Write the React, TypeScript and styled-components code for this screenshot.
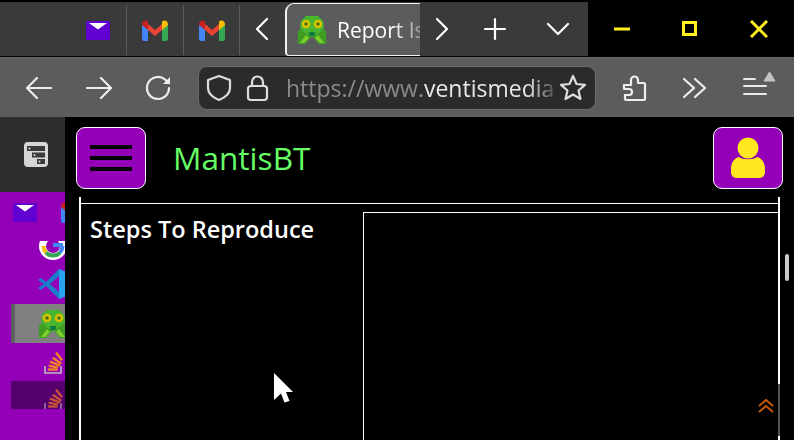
import * as React from "react";
import styled, { createGlobalStyle } from "styled-components";

const Global = createGlobalStyle`
    html, body {
        margin: 0;
        background: #000;
        font-family: "Open Sans", "Noto Sans", sans-serif;
    }
`;

const Window = styled.div`
    position: relative;
    width: 794px;
    height: 440px;
    overflow: hidden;
    display: flex;
    flex-direction: column;
    background: #000;
`;

const TitleBar = styled.header`
    flex: 0 0 auto;
    height: 54px;
    margin-top: 2px;
    margin-bottom: 1px;
    display: flex;
    align-items: stretch;
    color: #fff;
`;

const TabStrip = styled.div`
    width: 588px;
    flex: 0 0 auto;
    padding-left: 70px;
    box-sizing: border-box;
    display: flex;
    background: #3a3a3a;
`;

const PinnedTab = styled.div`
    width: ${props => props.$width}px;
    flex: 0 0 auto;
    box-sizing: border-box;
    border-right: 1px solid #5c5c5c;
    margin: 3px 0 1px;
    display: flex;
    align-items: center;
    justify-content: center;
`;

const StripButton = styled.div`
    width: ${props => props.$width}px;
    flex: 0 0 auto;
    display: flex;
    align-items: center;
    justify-content: center;
`;

const ActiveTab = styled.div`
    width: 135px;
    height: 53px;
    flex: 0 0 auto;
    margin-top: 1px;
    box-sizing: border-box;
    padding-left: 11px;
    border: 1px solid #f2f2f2;
    border-left-width: 2px;
    border-right: 0;
    border-radius: 9px 0 0 4px;
    background: #5b5c5e;
    display: flex;
    align-items: center;
    gap: 11px;
    overflow: hidden;
`;

const TabTitle = styled.span`
    font-size: 21px;
    color: #fff;
    white-space: nowrap;
    -webkit-mask-image: linear-gradient(90deg, #000 62%, rgba(0, 0, 0, .25) 100%);
    mask-image: linear-gradient(90deg, #000 62%, rgba(0, 0, 0, .25) 100%);
`;

const WindowControls = styled.div`
    flex: 1;
    display: flex;
    align-items: center;
`;

const WindowControl = styled.div`
    width: ${props => props.$width}px;
    display: flex;
    justify-content: center;
`;

const NavBar = styled.nav`
    flex: 0 0 auto;
    height: 60px;
    padding-left: 9px;
    box-sizing: border-box;
    display: flex;
    align-items: center;
    background: #5b5c5e;
    border-top: 1px solid #6a6a6c;
`;

const NavButton = styled.div`
    width: 60px;
    display: flex;
    justify-content: center;
    color: #eee;
`;

const UrlBar = styled.div`
    width: 398px;
    height: 44px;
    margin: 0 9px;
    box-sizing: border-box;
    border: 1px solid #6c6c6e;
    border-radius: 9px;
    background: #2b2b2b;
    display: flex;
    align-items: center;
    color: #ddd;
`;

const UrlIcon = styled.span`
    width: ${props => props.$width}px;
    flex: 0 0 auto;
    display: flex;
    justify-content: flex-end;
`;

const UrlText = styled.span`
    width: 268px;
    margin-left: 14px;
    font-size: 23px;
    color: #8b8b8b;
    white-space: nowrap;
    -webkit-mask-image: linear-gradient(90deg, #000 90%, rgba(0, 0, 0, .2) 100%);
    mask-image: linear-gradient(90deg, #000 90%, rgba(0, 0, 0, .2) 100%);

    b {
        font-weight: 400;
        color: #e8e8e8;
    }
`;

const Body = styled.div`
    flex: 1;
    min-height: 0;
    display: flex;
`;

const Sidebar = styled.aside`
    width: 65px;
    flex: 0 0 auto;
    overflow: hidden;
    display: flex;
    flex-direction: column;
    background: #9400b8;
`;

const SidebarHead = styled.div`
    height: 75px;
    flex: 0 0 auto;
    padding-left: 24px;
    display: flex;
    align-items: center;
    background: #2e2e2e;
`;

const SidebarRow = styled.div`
    height: ${props => props.$height}px;
    margin-top: ${props => props.$top || 0}px;
    margin-left: 11px;
    padding-left: ${props => props.$pad}px;
    padding-top: ${props => props.$padTop || 0}px;
    box-sizing: border-box;
    flex: 0 0 auto;
    display: flex;
    align-items: ${props => props.$align || "center"};
    gap: ${props => props.$gap || 0}px;
    overflow: hidden;
    background: ${props => props.$bg || "transparent"};
    border-left: ${props => props.$strip ? `4px solid ${props.$strip}` : "0"};

    svg {
        flex: 0 0 auto;
    }
`;

const Main = styled.main`
    position: relative;
    flex: 1;
    min-width: 0;
    overflow: hidden;
`;

const TopBar = styled.div`
    height: 62px;
    padding: 10px 11px 8px;
    display: flex;
    align-items: stretch;
    justify-content: space-between;
`;

const SquareButton = styled.button`
    width: 70px;
    padding: 0;
    box-sizing: border-box;
    background: #9400b8;
    border: 1px solid #fff;
    border-radius: 9px;
    display: flex;
    align-items: center;
    justify-content: center;
`;

const Burger = styled.span`
    width: 42px;
    display: flex;
    flex-direction: column;
    gap: 7px;

    i {
        display: block;
        height: 4px;
        background: #000;
    }
`;

const Brand = styled.div`
    flex: 1;
    padding-left: 27px;
    padding-bottom: 2px;
    display: flex;
    align-items: center;
    font-size: 31.6px;
    color: #66ff66;
`;

const Panel = styled.section`
    margin-left: 14px;
    width: 701px;
    height: 260px;
    box-sizing: border-box;
    padding-top: 6px;
    border-left: 2px solid #fff;
    border-right: 2px solid #fff;
`;

const Row = styled.div`
    height: 100%;
    display: grid;
    grid-template-columns: 282px 1fr;
    border-top: 1px solid #fff;
`;

const Label = styled.div`
    padding: 8px 9px;
    font-size: 23.500px;
    line-height: 34px;
    font-weight: 600;
    color: #fff;
    white-space: nowrap;
`;

const Value = styled.div`
    margin-top: 8px;
    border-top: 1px solid #fff;
    border-left: 1px solid #fff;
`;

const ScrollThumb = styled.div`
    position: absolute;
    left: 720px;
    top: 137px;
    width: 4px;
    height: 27px;
    border-radius: 2px;
    background: #c8c8c8;
`;

const ToTop = styled.div`
    position: absolute;
    left: 677px;
    top: 267px;
    width: 38px;
    height: 52px;
    border-right: 2px solid #555;
    background: #000;
    display: flex;
    align-items: center;
    justify-content: center;
    padding-left: 12px;
    padding-bottom: 8px;
    box-sizing: border-box;
`;

const Pointer = styled.svg`
    position: absolute;
    left: 273px;
    top: 372px;
`;

const Stroke = ({ size = 28, width = 2.2, children }: { size?: number; width?: number; children: React.ReactNode }) => (
    <svg width={size} height={size} viewBox="0 0 28 28" fill="none" stroke="currentColor" strokeWidth={width} strokeLinecap="round" strokeLinejoin="round">
        {children}
    </svg>
);

const YahooMail = () => (
    <svg width="24" height="19" viewBox="0 0 24 19">
        <rect width="24" height="19" rx="1" fill="#6001d2" />
        <path d="M3 2h18l-9 6.500z" fill="#fff" />
    </svg>
);

const Gmail = () => (
    <svg width="26" height="21" viewBox="0 0 26 21" fill="none">
        <path d="M0 4v15a2 2 0 0 0 2 2h4V8z" fill="#4285f4" />
        <path d="M26 4v15a2 2 0 0 1-2 2h-4V8z" fill="#34a853" />
        <path d="M6 4l7 6 7-6v6l-7 6-7-6z" fill="#ea4335" />
        <path d="M0 4.500C0 1 3.500-.5 6 1.500V10L0 5z" fill="#c5221f" />
        <path d="M26 4.500C26 1 22.500-.5 20 1.500V10l6-5z" fill="#fbbc04" />
    </svg>
);

const Mantis = ({ size = 28 }: { size?: number }) => (
    <svg width={size} height={size} viewBox="0 0 28 28" style={{ flex: "0 0 auto" }}>
        <path d="M0 28V15l6-3 8 8 8-8 6 3v13h-7l-7-8-7 8z" fill="#3f9e22" />
        <path d="M2 27l6-8 3 3-5 5zM26 27l-6-8-3 3 5 5z" fill="#7fd02c" />
        <path d="M8 0h12l5 5 1 7-5 5-7 4-7-4-5-5 1-7z" fill="#49b52e" />
        <path d="M11 16h6l-.500 4h-5z" fill="#0f7a3c" />
        <circle cx="8" cy="8" r="4.300" fill="#d8c400" />
        <circle cx="20" cy="8" r="4.300" fill="#d8c400" />
        <circle cx="8" cy="8" r="1.800" fill="#4f6a10" />
        <circle cx="20" cy="8" r="1.800" fill="#4f6a10" />
    </svg>
);

const StackOverflow = ({ bars, tray }: { bars: string; tray: string }) => (
    <svg width="20" height="24" viewBox="0 0 20 24" fill="none">
        <path d="M1 14v7h16v-7" stroke={tray} strokeWidth="1.600" />
        <g stroke={bars} strokeWidth="2.400">
            <path d="M4 17.500h9.500" />
            <path d="M4.700 13.700l9.300 2" />
            <path d="M6 9.700l10 4" />
            <path d="M8.700 5.700l8.600 6" />
            <path d="M12 .500l6 7.800" />
        </g>
    </svg>
);

const VsCode = () => (
    <svg width="28" height="30" viewBox="0 0 28 30">
        <path d="M21 0l7 3v24l-7 3L8 17l-5 4-3-2 6-4-6-4 3-2 5 4z" fill="#1a7fc9" />
        <path d="M21 7v16l-9-8z" fill="#9400b8" />
        <path d="M21 0l7 3v24l-7 3z" fill="#2aa3ef" />
    </svg>
);

const GoogleG = () => (
    <svg width="28" height="20" viewBox="0 0 28 20" fill="none">
        <circle cx="14" cy="6" r="14" fill="#fff" />
        <circle cx="14" cy="6" r="7" fill="#9400b8" />
        <path d="M4.500 6a9.500 9.500 0 0 0 2.500 6.500" stroke="#fbbc05" strokeWidth="4" />
        <path d="M7 12.500a9.500 9.500 0 0 0 14 0" stroke="#34a853" strokeWidth="4" />
        <path d="M21 12.500a9.500 9.500 0 0 0 2.500-6.500" stroke="#4285f4" strokeWidth="4" />
        <path d="M14 5h10" stroke="#4285f4" strokeWidth="4" />
    </svg>
);

const TreeIcon = () => (
    <svg width="24" height="25" viewBox="0 0 24 25">
        <rect width="24" height="25" rx="4" fill="#d4d6d8" />
        <rect x="3" y="4" width="18" height="5" fill="#3a3a3a" />
        <rect x="8" y="10.500" width="13" height="5" fill="#3a3a3a" />
        <rect x="13" y="17" width="8" height="5" fill="#3a3a3a" />
        <circle cx="5.500" cy="6.500" r="1" fill="#ddd" />
        <circle cx="10.500" cy="13" r="1" fill="#ddd" />
        <circle cx="15.500" cy="19.500" r="1" fill="#ddd" />
    </svg>
);

const UserIcon = () => (
    <svg width="36" height="42" viewBox="0 0 36 42">
        <circle cx="18" cy="11" r="10.500" fill="#ffe81f" />
        <path d="M9 20c3 3 15 3 18 0 5 1 8 6 8 12v4a6 6 0 0 1-5 5H6a6 6 0 0 1-5-5v-4c0-6 3-11 8-12z" fill="#ffe81f" />
    </svg>
);

const App = () => (
    <Window>
        <Global />
        <TitleBar>
            <TabStrip>
                <PinnedTab $width={57}><YahooMail /></PinnedTab>
                <PinnedTab $width={57}><Gmail /></PinnedTab>
                <PinnedTab $width={56}><Gmail /></PinnedTab>
                <StripButton $width={45}>
                    <Stroke><path d="M18 4L8 14l10 10" /></Stroke>
                </StripButton>
                <ActiveTab>
                    <Mantis />
                    <TabTitle>Report Is</TabTitle>
                </ActiveTab>
                <StripButton $width={42}>
                    <Stroke><path d="M10 4l10 10-10 10" /></Stroke>
                </StripButton>
                <StripButton $width={65}>
                    <Stroke><path d="M14 4v20M4 14h20" /></Stroke>
                </StripButton>
                <StripButton $width={61}>
                    <Stroke><path d="M4 9l10 10L24 9" /></Stroke>
                </StripButton>
            </TabStrip>
            <WindowControls>
                <WindowControl $width={68}>
                    <svg width="16" height="16" viewBox="0 0 16 16"><path d="M0 8h16" stroke="#ffee22" strokeWidth="3" /></svg>
                </WindowControl>
                <WindowControl $width={68}>
                    <svg width="16" height="16" viewBox="0 0 16 16" fill="none"><rect x="1.500" y="1.500" width="12" height="12" stroke="#ffee22" strokeWidth="3" /></svg>
                </WindowControl>
                <WindowControl $width={70}>
                    <svg width="18" height="18" viewBox="0 0 18 18"><path d="M1 1l16 16M17 1L1 17" stroke="#ffee22" strokeWidth="3" /></svg>
                </WindowControl>
            </WindowControls>
        </TitleBar>
        <NavBar>
            <NavButton>
                <Stroke><path d="M26 14H3M12 4L2 14l10 10" /></Stroke>
            </NavButton>
            <NavButton>
                <Stroke><path d="M2 14h23M16 4l10 10-10 10" /></Stroke>
            </NavButton>
            <NavButton>
                <Stroke><path d="M24 14a11 11 0 1 1-4-8.500l4 3.500" /><path d="M25 3v7h-7z" fill="currentColor" stroke="none" /></Stroke>
            </NavButton>
            <UrlBar>
                <UrlIcon $width={34}>
                    <Stroke><path d="M14 2l11 4v8c0 6-6 10-11 12C9 24 3 20 3 14V6z" /></Stroke>
                </UrlIcon>
                <UrlIcon $width={39}>
                    <Stroke><rect x="4" y="12" width="19" height="14" rx="3" /><path d="M8 12V8a5.500 5.500 0 0 1 11 0v4" /></Stroke>
                </UrlIcon>
                <UrlText>https://www.<b>ventismedia</b>.</UrlText>
                <UrlIcon $width={33}>
                    <Stroke><path d="M14 2l3.500 8 8.500 .800-6.500 5.700 2 8.500-7.500-4.500-7.500 4.500 2-8.500L2 10.800l8.500-.800z" /></Stroke>
                </UrlIcon>
            </UrlBar>
            <NavButton>
                <Stroke><path d="M3 11h7V6a3.500 3.500 0 0 1 7 0v3h6a1 1 0 0 1 1 1v15a1 1 0 0 1-1 1H5a1 1 0 0 1-1-1v-4h4a3 3 0 0 0 0-6H3z" /></Stroke>
            </NavButton>
            <NavButton>
                <Stroke><path d="M3 5l10 9-10 9M14 5l10 9-10 9" /></Stroke>
            </NavButton>
            <NavButton>
                <svg width="42" height="36" viewBox="0 0 42 36" fill="none">
                    <path d="M10 9h11M10 16h22M10 24h22" stroke="#e8e8e8" strokeWidth="2" strokeLinecap="round" />
                    <path d="M30 11l5.500-9 5.500 9z" fill="#c4c4c6" stroke="#c4c4c6" strokeLinejoin="round" />
                </svg>
            </NavButton>
        </NavBar>
        <Body>
            <Sidebar>
                <SidebarHead><TreeIcon /></SidebarHead>
                <SidebarRow $height={24} $top={8} $pad={2} $gap={24}><YahooMail /><Gmail /></SidebarRow>
                <SidebarRow $height={19} $top={17} $pad={28} $align="flex-end"><GoogleG /></SidebarRow>
                <SidebarRow $height={30} $top={9} $pad={27}><VsCode /></SidebarRow>
                <SidebarRow $height={39} $top={5} $pad={24} $bg="#808080" $strip="#5e5e5e"><Mantis size={28} /></SidebarRow>
                <SidebarRow $height={24} $top={9} $pad={33}><StackOverflow bars="#f48024" tray="#bcbbbb" /></SidebarRow>
                <SidebarRow $height={28} $top={5} $pad={33} $padTop={8} $bg="#560070" $align="flex-start"><StackOverflow bars="#c9503a" tray="#9a7aa8" /></SidebarRow>
            </Sidebar>
            <Main>
                <TopBar>
                    <SquareButton><Burger><i /><i /><i /></Burger></SquareButton>
                    <Brand>MantisBT</Brand>
                    <SquareButton><UserIcon /></SquareButton>
                </TopBar>
                <Panel>
                    <Row>
                        <Label>Steps To Reproduce</Label>
                        <Value />
                    </Row>
                </Panel>
                <ScrollThumb />
                <ToTop>
                    <svg width="16" height="14" viewBox="0 0 16 14" fill="none" stroke="#c85a08" strokeWidth="2">
                        <path d="M1 7l7-6 7 6M1 13l7-6 7 6" />
                    </svg>
                </ToTop>
            </Main>
        </Body>
        <Pointer width="22" height="32" viewBox="0 0 22 32">
            <path d="M1 1l19 19h-7l3.500 9-5 1.500-3.500-9L1 28z" fill="#fff" />
        </Pointer>
    </Window>
);

export default App;
